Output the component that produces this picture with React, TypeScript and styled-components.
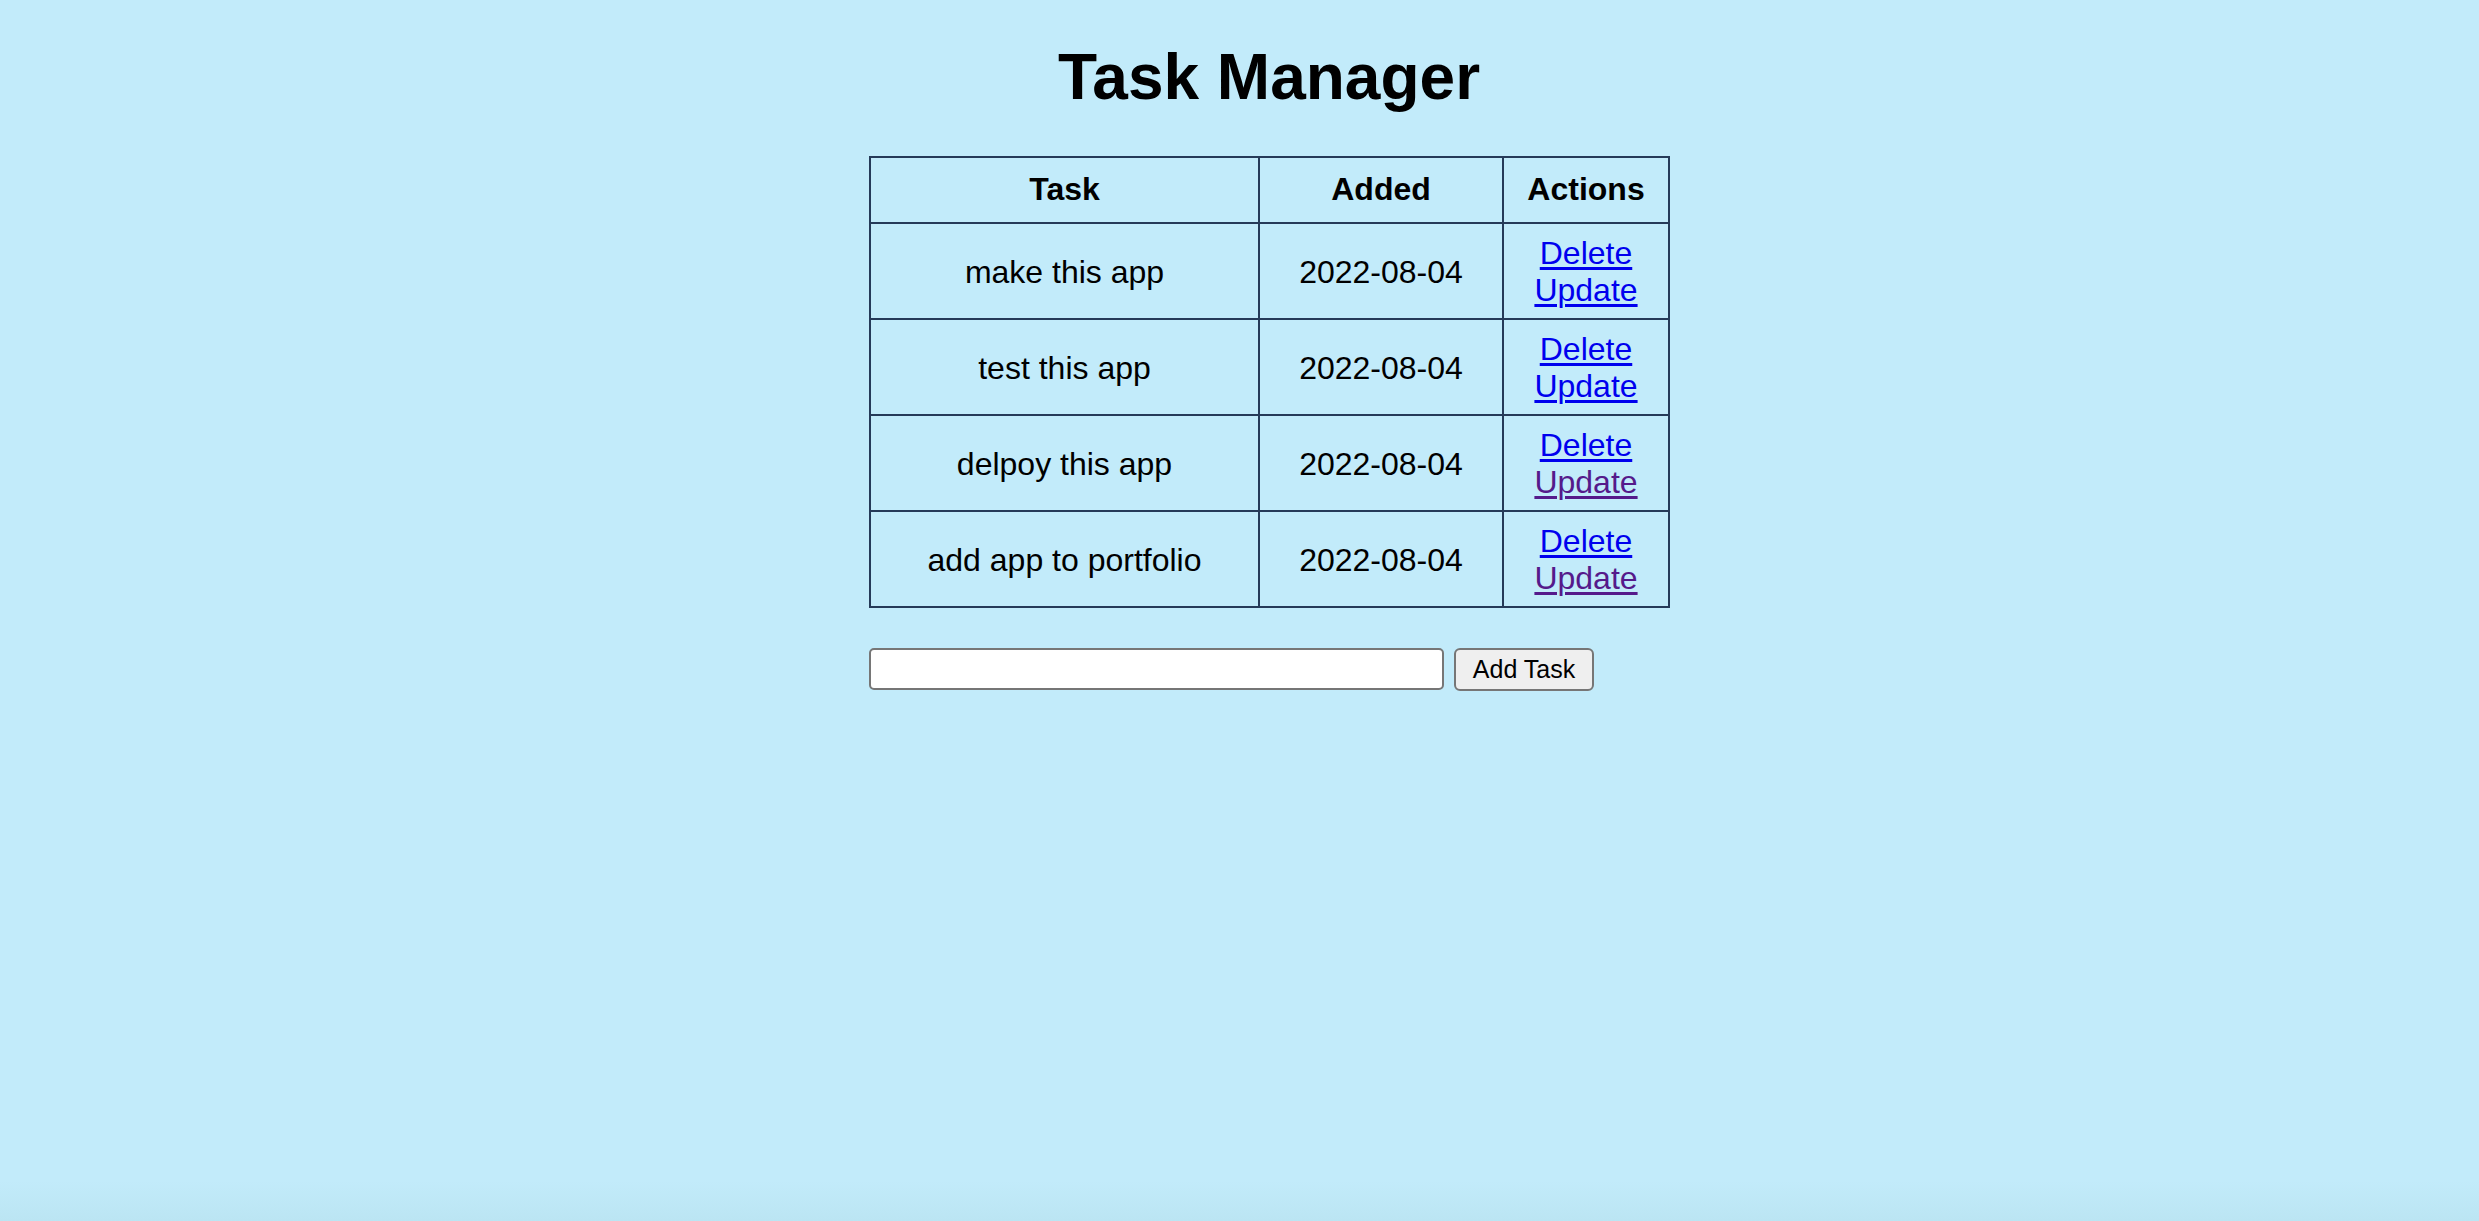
import React from "react";
import styled, { createGlobalStyle } from "styled-components";

const GlobalStyle = createGlobalStyle`
  html, body {
    margin: 0;
    padding: 0;
    min-height: 100%;
  }
  html {
    height: 100%;
    background: linear-gradient(to bottom, #c2ebfa 0, #c2ebfa calc(100% - 40px), #bbe5f3 100%);
  }
  body {
    font-family: "Liberation Sans", Arial, Helvetica, sans-serif;
    color: #000;
  }
`;

const Page = styled.div`
  display: flex;
  flex-direction: column;
  align-items: center;
  padding-left: 59px;
`;

const Title = styled.h1`
  margin: 40px 0 42px;
  font-size: 64px;
  line-height: 74px;
  font-weight: 700;
`;

const Content = styled.div`
  display: flex;
  flex-direction: column;
  align-items: flex-start;
  width: 800px;
`;

const Table = styled.table`
  width: 799px;
  border-collapse: collapse;
  border: 2px solid #253a58;
  table-layout: fixed;
  font-size: 32px;
`;

const HeadCell = styled.th`
  border: 2px solid #253a58;
  padding: 13px 10px 14px;
  line-height: 37px;
  font-weight: 700;
  text-align: center;
`;

const Cell = styled.td`
  border: 2px solid #253a58;
  padding: 11px 10px 9px;
  line-height: 37px;
  text-align: center;
  vertical-align: middle;
`;

const ActionLink = styled.a<{ $visited?: boolean }>`
  display: block;
  color: ${(p) => (p.$visited ? "#551a8b" : "#0000ee")};
  text-decoration: underline;
  text-decoration-thickness: 3px;
  text-underline-offset: 3px;
  cursor: pointer;
`;

const Form = styled.form`
  display: flex;
  align-items: flex-start;
  gap: 10px;
  margin-top: 40px;
`;

const TaskInput = styled.input`
  box-sizing: border-box;
  width: 575px;
  height: 42px;
  border: 2px solid #767676;
  border-radius: 5px;
  background: #ffffff;
  padding: 2px 6px;
  font-size: 26px;
  font-family: "Liberation Sans", Arial, sans-serif;
`;

const AddButton = styled.button`
  box-sizing: border-box;
  width: 140px;
  height: 43px;
  border: 2px solid #767676;
  border-radius: 6px;
  background: #efefef;
  color: #000;
  font-size: 25px;
  font-family: "Liberation Sans", Arial, sans-serif;
  padding: 0;
`;

const tasks = [
  { name: "make this app", date: "2022-08-04", visited: false },
  { name: "test this app", date: "2022-08-04", visited: false },
  { name: "delpoy this app", date: "2022-08-04", visited: true },
  { name: "add app to portfolio", date: "2022-08-04", visited: true },
];

export default function App() {
  return (
    <>
      <GlobalStyle />
      <Page>
        <Title>Task Manager</Title>
        <Content>
          <Table>
            <colgroup>
              <col style={{ width: 389 }} />
              <col style={{ width: 244 }} />
              <col style={{ width: 166 }} />
            </colgroup>
            <thead>
              <tr>
                <HeadCell>Task</HeadCell>
                <HeadCell>Added</HeadCell>
                <HeadCell>Actions</HeadCell>
              </tr>
            </thead>
            <tbody>
              {tasks.map((t) => (
                <tr key={t.name}>
                  <Cell>{t.name}</Cell>
                  <Cell>{t.date}</Cell>
                  <Cell>
                    <ActionLink href="#">Delete</ActionLink>
                    <ActionLink href="#" $visited={t.visited}>
                      Update
                    </ActionLink>
                  </Cell>
                </tr>
              ))}
            </tbody>
          </Table>
          <Form onSubmit={(e) => e.preventDefault()}>
            <TaskInput type="text" />
            <AddButton type="submit">Add Task</AddButton>
          </Form>
        </Content>
      </Page>
    </>
  );
}
